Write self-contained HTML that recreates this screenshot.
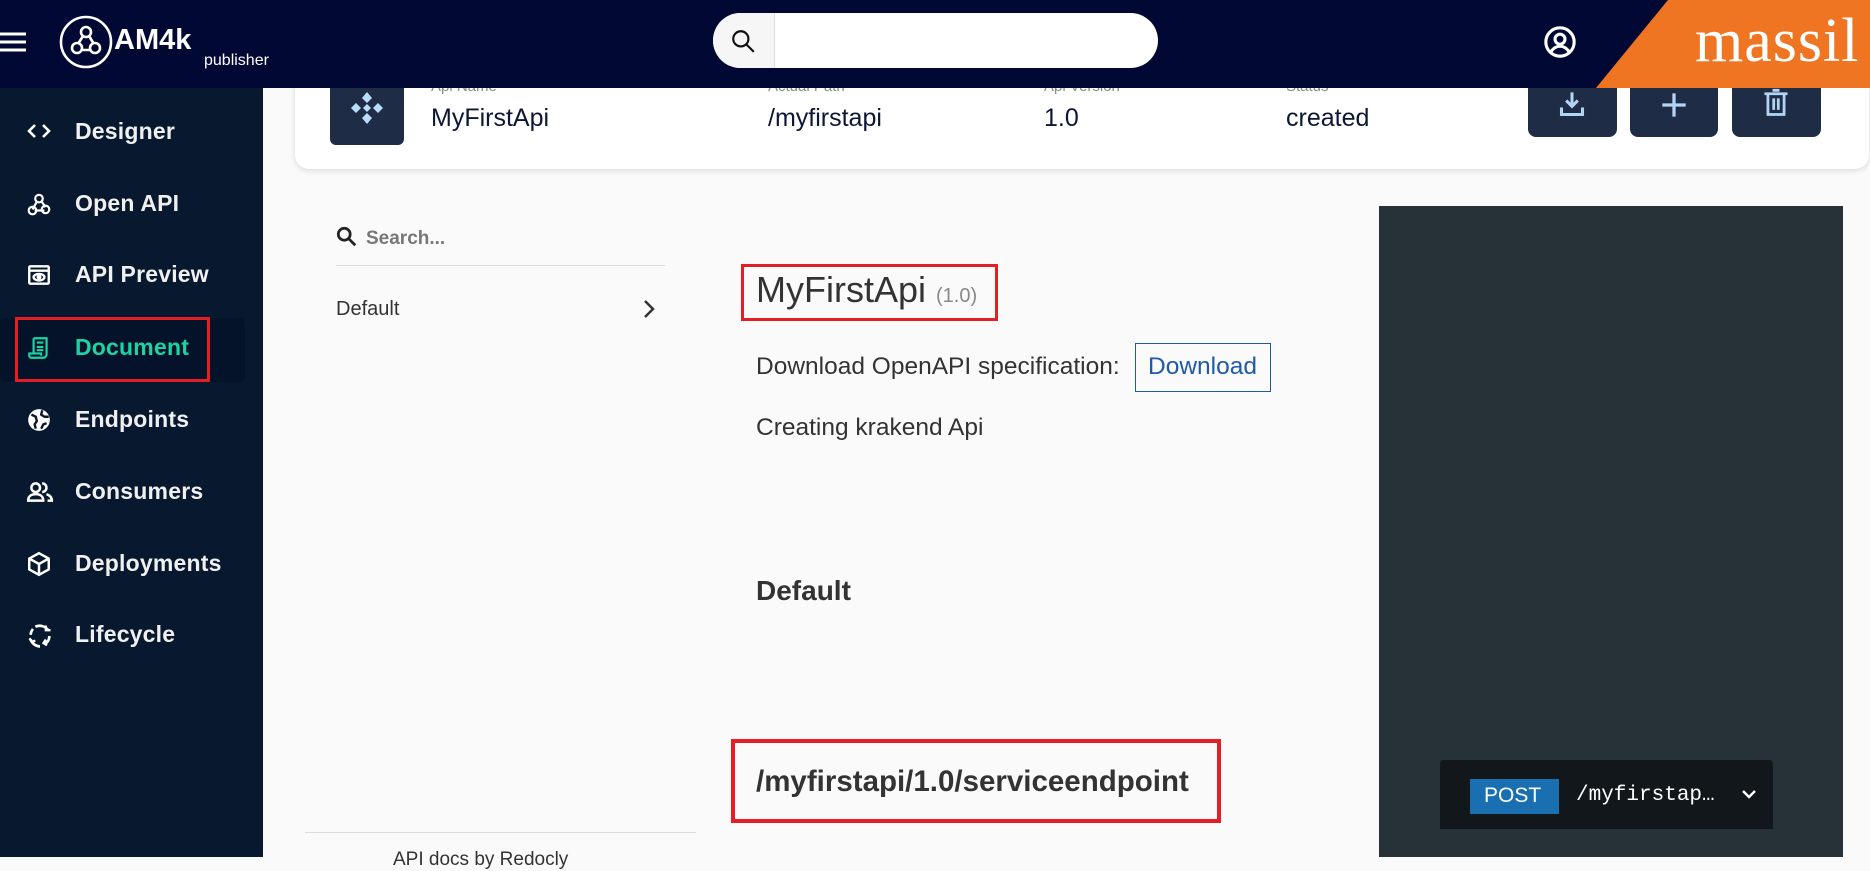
<!DOCTYPE html>
<html><head><meta charset="utf-8"><style>
*{margin:0;padding:0;box-sizing:border-box}
body{width:1870px;height:857px;overflow:hidden;background:#fafafa;font-family:"Liberation Sans",sans-serif;position:relative}
.abs{position:absolute}
#hdr{left:0;top:0;width:1870px;height:88px;background:#000833}
#side{left:0;top:88px;width:263px;height:769px;background:#07182f}
.nav{position:absolute;left:0;width:263px;height:40px;color:#f0f0f0;font-size:23px;font-weight:bold;letter-spacing:.2px}
.nav span{position:absolute;left:75px;top:7px}
.nav svg{position:absolute;left:26px;top:8px}
.t{position:absolute;white-space:nowrap}
</style></head><body>
<div id="side" class="abs"></div>
<div class="abs" style="left:0;top:318px;width:245px;height:64px;background:#04132a;border-radius:6px"></div>
<div class="abs" style="left:15px;top:317px;width:195px;height:65px;border:3px solid #e31e24"></div>

<div class="nav" style="top:111px"><svg width="26" height="24" viewBox="0 0 26 24" fill="none" stroke="#fff" stroke-width="2.6"><path d="M9 6 3 12 9 18M17 6l6 6-6 6"/></svg><span>Designer</span></div>
<div class="nav" style="top:183px"><svg width="26" height="26" viewBox="0 0 24 24" fill="none" stroke="#fff" stroke-width="2"><circle cx="12" cy="7" r="3.5"/><path d="M10 10 6 17M14 9l4 6M8 18h9"/><circle cx="6" cy="18" r="3.5"/><circle cx="18" cy="17" r="3.5"/></svg><span>Open API</span></div>
<div class="nav" style="top:254px"><svg width="26" height="26" viewBox="0 0 24 24" fill="none" stroke="#fff" stroke-width="2.2"><rect x="3" y="4" width="18" height="16" rx="1"/><path d="M3 8h18"/><ellipse cx="12" cy="14" rx="5" ry="3"/><circle cx="12" cy="14" r="1.2" fill="#fff"/></svg><span>API Preview</span></div>
<div class="nav" style="top:327px;color:#1dd3a3"><svg width="26" height="26" viewBox="0 0 24 24" fill="none" stroke="#1dd3a3" stroke-width="2"><path d="M7 3h12v15a3 3 0 0 1-3 3H5a2 2 0 0 1-2-2v-2h11v2"/><path d="M7 3v14M10 7h6M10 11h6M10 14h6"/></svg><span>Document</span></div>
<div class="nav" style="top:399px"><svg width="26" height="26" viewBox="0 0 24 24"><circle cx="12" cy="12" r="10" fill="#fff"/><path d="M5 7l4 2 1 4-2 3 1 4M15 3l-1 4 3 2 4 0M14 20l2-4 3-1" stroke="#07182f" stroke-width="2.2" fill="none"/></svg><span>Endpoints</span></div>
<div class="nav" style="top:471px"><svg width="28" height="26" viewBox="0 0 26 24" fill="none" stroke="#fff" stroke-width="2.3"><circle cx="9" cy="8" r="4"/><path d="M2 20c0-4 3-6 7-6s7 2 7 6zM15 4a4 4 0 0 1 0 8M19 14c3 1 5 3 5 6h-4"/></svg><span>Consumers</span></div>
<div class="nav" style="top:543px"><svg width="26" height="26" viewBox="0 0 24 24" fill="none" stroke="#fff" stroke-width="2.3"><path d="M12 2 21 7v10l-9 5-9-5V7zM3 7l9 5 9-5M12 12v10"/></svg><span>Deployments</span></div>
<div class="nav" style="top:614px"><svg width="28" height="28" viewBox="0 0 24 24" fill="none" stroke="#fff" stroke-width="2.3"><path d="M8 4a9 9 0 0 1 11 3M20 12a8 8 0 0 1-4 7M12 21a9 9 0 0 1-8-6M4 11a8 8 0 0 1 2-5"/><path d="M17 3v4h4M18 20l-3-2 2-3M3 14l2 3 3-1" stroke-width="2"/></svg><span>Lifecycle</span></div>

<!-- top card -->
<div class="abs" style="left:295px;top:40px;width:1574px;height:129px;background:#fff;border-radius:14px;box-shadow:0 2px 6px rgba(0,0,0,.12)"></div>
<div class="abs" style="left:330px;top:70px;width:74px;height:75px;background:#1e2d45;border-radius:6px"></div>
<svg class="abs" style="left:349px;top:90px" width="36" height="36" viewBox="0 0 36 36" fill="#b8dcfa"><path d="M18 2l5 6-5 5-5-5zM18 23l5 5-5 6-5-6zM2 18l5-5 5 5-5 5zM34 18l-5-5-5 5 5 5zM18 14l4 4-4 4-4-4z"/></svg>
<div class="t" style="left:431px;top:78px;font-size:15px;color:#888">Api Name</div>
<div class="t" style="left:768px;top:78px;font-size:15px;color:#888">Actual Path</div>
<div class="t" style="left:1044px;top:78px;font-size:15px;color:#888">Api Version</div>
<div class="t" style="left:1286px;top:78px;font-size:15px;color:#888">Status</div>
<div class="t" style="left:431px;top:104px;font-size:25px;color:#0d1633">MyFirstApi</div>
<div class="t" style="left:768px;top:104px;font-size:25px;color:#0d1633">/myfirstapi</div>
<div class="t" style="left:1044px;top:104px;font-size:25px;color:#0d1633">1.0</div>
<div class="t" style="left:1286px;top:104px;font-size:25px;color:#0d1633">created</div>
<div class="abs" style="left:1528px;top:60px;width:89px;height:77px;background:#1e2d45;border-radius:8px"></div>
<div class="abs" style="left:1630px;top:60px;width:88px;height:77px;background:#1e2d45;border-radius:8px"></div>
<div class="abs" style="left:1732px;top:60px;width:89px;height:77px;background:#1e2d45;border-radius:8px"></div>
<svg class="abs" style="left:1558px;top:90px" width="28" height="28" viewBox="0 0 24 24" fill="none" stroke="#b3d4f5" stroke-width="2.6"><path d="M12 2v11M7 9l5 5 5-5M3 15v6h18v-6"/></svg>
<svg class="abs" style="left:1660px;top:91px" width="28" height="28" viewBox="0 0 24 24" stroke="#b3d4f5" stroke-width="2.8"><path d="M12 2v20M2 12h20"/></svg>
<svg class="abs" style="left:1762px;top:88px" width="28" height="30" viewBox="0 0 24 26" fill="none" stroke="#b3d4f5" stroke-width="2.4"><path d="M2 5h20M9 2h6M5 5v18h14V5M10 9v10M14 9v10"/></svg>

<!-- header -->
<div id="hdr" class="abs"></div>
<svg class="abs" style="left:0;top:30px" width="28" height="24" viewBox="0 0 28 24" stroke="#fff" stroke-width="3"><path d="M0 4h26M0 12h26M0 20h26"/></svg>
<svg class="abs" style="left:58px;top:14px" width="56" height="56" viewBox="0 0 56 56" fill="none" stroke="#fff" stroke-width="2.6"><circle cx="28" cy="28" r="25"/><circle cx="28" cy="18" r="5"/><circle cx="19" cy="34" r="5"/><circle cx="37" cy="34" r="5"/><path d="M25 22l-5 8M31 22l5 8M23 36h10"/></svg>
<div class="t" style="left:114px;top:24px;font-size:29px;font-weight:bold;color:#fff">AM4k</div>
<div class="t" style="left:204px;top:52px;font-size:16px;color:#fff">publisher</div>
<div class="abs" style="left:713px;top:13px;width:445px;height:55px;background:#fff;border-radius:28px;overflow:hidden"><div style="width:62px;height:55px;background:#f6f6f6;border-right:1px solid #ddd"></div></div>
<svg class="abs" style="left:730px;top:28px" width="26" height="26" viewBox="0 0 24 24" fill="none" stroke="#111" stroke-width="2"><circle cx="10" cy="10" r="7"/><path d="M15 15l7 7"/></svg>
<svg class="abs" style="left:1543px;top:25px" width="34" height="34" viewBox="0 0 24 24" fill="none" stroke="#fff" stroke-width="2.2"><circle cx="12" cy="12" r="10"/><circle cx="12" cy="10" r="3.5"/><path d="M5.5 19c2-3 4-4 6.5-4s4.5 1 6.5 4"/></svg>
<svg class="abs" style="left:1596px;top:0" width="274" height="88"><polygon points="0,88 72,0 274,0 274,88" fill="#f07522"/></svg>
<div class="t" style="left:1695px;top:6px;font-family:'Liberation Serif',serif;font-size:62px;color:#fff;letter-spacing:1px">massil</div>

<!-- left redoc menu -->
<svg class="abs" style="left:336px;top:226px" width="22" height="22" viewBox="0 0 24 24" fill="none" stroke="#222" stroke-width="3"><circle cx="9" cy="9" r="6.5"/><path d="M14 14l7 7"/></svg>
<div class="t" style="left:366px;top:228px;font-size:19px;font-weight:bold;color:#777">Search...</div>
<div class="abs" style="left:336px;top:265px;width:329px;height:1px;background:#ddd"></div>
<div class="t" style="left:336px;top:298px;font-size:20px;color:#333">Default</div>
<svg class="abs" style="left:641px;top:298px" width="16" height="22" viewBox="0 0 16 22" fill="none" stroke="#333" stroke-width="2.5"><path d="M4 3l8 8-8 8"/></svg>
<div class="abs" style="left:305px;top:832px;width:391px;height:1px;background:#ddd"></div>
<div class="t" style="left:393px;top:849px;font-size:19px;color:#333">API docs by Redocly</div>

<!-- main -->
<div class="abs" style="left:741px;top:264px;width:257px;height:57px;border:3px solid #e31e24"></div>
<div class="t" style="left:756px;top:269px;font-size:36px;color:#333">MyFirstApi <span style="font-size:20px;color:#888">(1.0)</span></div>
<div class="t" style="left:756px;top:353px;font-size:24.5px;color:#333">Download OpenAPI specification:</div>
<div class="abs" style="left:1135px;top:343px;width:136px;height:49px;border:1px solid #1e5aa8"></div>
<div class="t" style="left:1148px;top:353px;font-size:24.5px;color:#1e5aa8">Download</div>
<div class="t" style="left:756px;top:414px;font-size:24.5px;color:#333">Creating krakend Api</div>
<div class="t" style="left:756px;top:575px;font-size:28px;font-weight:bold;color:#333">Default</div>
<div class="abs" style="left:731px;top:739px;width:490px;height:84px;border:4px solid #e31e24"></div>
<div class="t" style="left:756px;top:765px;font-size:29.5px;font-weight:bold;color:#333;letter-spacing:0">/myfirstapi/1.0/serviceendpoint</div>

<!-- right panel -->
<div class="abs" style="left:1379px;top:206px;width:464px;height:651px;background:#263238"></div>
<div class="abs" style="left:1440px;top:760px;width:333px;height:69px;background:#11171a;border-radius:4px 4px 0 0"></div>
<div class="abs" style="left:1470px;top:779px;width:89px;height:35px;background:#1a6fb0"></div>
<div class="t" style="left:1484px;top:784px;font-size:21px;color:#fff">POST</div>
<div class="t" style="left:1576px;top:784px;font-size:21px;color:#fff;font-family:'Liberation Mono',monospace">/myfirstap…</div>
<svg class="abs" style="left:1740px;top:788px" width="18" height="14" viewBox="0 0 18 14" fill="none" stroke="#fff" stroke-width="2.4"><path d="M3 3l6 6 6-6"/></svg>
</body></html>
